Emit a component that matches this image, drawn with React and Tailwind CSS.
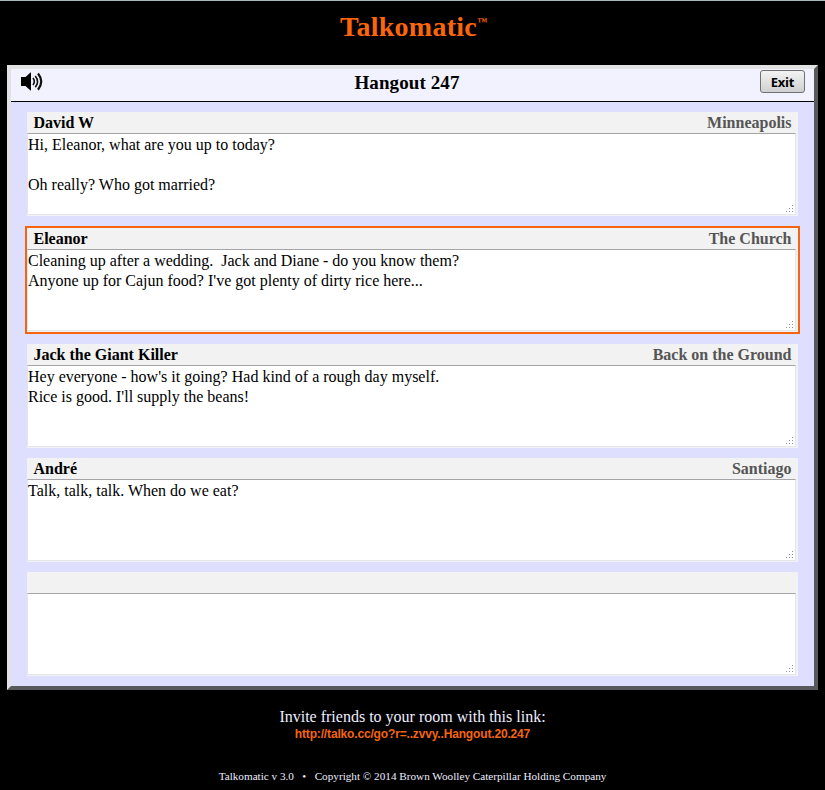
import React from 'react';

const talkers = [
  { name: 'David W', place: 'Minneapolis', text: 'Hi, Eleanor, what are you up to today?\n\nOh really? Who got married?' },
  {
    name: 'Eleanor',
    place: 'The Church',
    text: "Cleaning up after a wedding.  Jack and Diane - do you know them?\nAnyone up for Cajun food? I've got plenty of dirty rice here...",
    active: true,
  },
  {
    name: 'Jack the Giant Killer',
    place: 'Back on the Ground',
    text: "Hey everyone - how's it going? Had kind of a rough day myself.\nRice is good. I'll supply the beans!",
  },
  { name: 'André', place: 'Santiago', text: 'Talk, talk, talk. When do we eat?' },
  { name: '', place: '', text: '' },
];

function Speaker() {
  return (
    <svg width="24" height="20" viewBox="0 0 24 20" className="block">
      <path d="M1 5h4.500L10.500 .5h.5v18h-.5L5.500 14H1z" fill="#000" />
      <g fill="none" stroke="#111" strokeWidth="1.600">
        <path d="M13 6q2.600 3.500 0 7" />
        <path d="M15.300 4q4.400 5.500 0 11.200" />
        <path d="M18 1.500q6.500 8 0 16.200" strokeWidth="2.200" />
      </g>
    </svg>
  );
}

function Grip() {
  return (
    <svg width="8" height="8" viewBox="0 0 8 8" className="absolute right-[1px] bottom-[1px]" fill="#909090">
      <rect x="6" y="0" width="1" height="1" />
      <rect x="3" y="3" width="1" height="1" />
      <rect x="6" y="3" width="1" height="1" />
      <rect x="0" y="6" width="1" height="1" />
      <rect x="3" y="6" width="1" height="1" />
      <rect x="6" y="6" width="1" height="1" />
    </svg>
  );
}

function Talker({ name, place, text, active }) {
  return (
    <section className={active ? 'border-2 border-[#f5650f]' : 'mx-[2px]'}>
      <div className="h-[104px] bg-[#f2f2f2]">
        <div className="flex h-[21px] justify-between pr-[6.500px] pl-[6.500px] text-[16px] leading-[22px] font-bold">
          <span>{name}</span>
          <span className="text-[#555]">{place}</span>
        </div>
        <div className="relative mr-[2px] h-[82px] border border-[#e3e6ea] border-t-[#a5a5a9] bg-white text-[16px] leading-5 whitespace-pre">
          <div className="pt-[1px]">{text}</div>
          <Grip />
        </div>
      </div>
    </section>
  );
}

export default function App() {
  return (
    <div className="flex h-[790px] w-[825px] flex-col overflow-hidden border-t border-[#a9b7bd] bg-black font-['Liberation_Serif',serif] text-black">
      <header className="flex h-[64px] shrink-0 justify-center pt-[9px] pl-[2px] text-[28px] leading-[34px] font-bold text-[#fb660a]">
        <h1 className="tracking-[0.250px]">Talkomatic</h1>
        <span className="pt-[6px] text-[10px] leading-[12px]">™</span>
      </header>
      <main className="ml-[7px] h-[625px] w-[811px] shrink-0 border-4 border-t-[#e2e2e2] border-r-[#58595d] border-b-[#58595d] border-l-[#e2e2e4] bg-[#dedeff]">
        <div className="grid h-[33px] grid-cols-[1fr_auto_1fr] border-b border-black bg-[#f2f2ff] pr-[9px] pl-[9px]">
          <div className="pt-[3px]"><Speaker /></div>
          <h2 className="relative -left-[5.500px] pt-[2px] text-[19px] leading-[24px] font-bold tracking-[0.100px]">Hangout 247</h2>
          <button className="mt-[1px] h-[23px] w-[45px] justify-self-end rounded-[3px] border border-[#707070] bg-linear-to-b from-[#f3f3f3] to-[#d0d0d0] font-['Open_Sans',sans-serif] text-[13px] leading-[22px] font-bold tracking-[-0.200px]">
            Exit
          </button>
        </div>
        <div className="flex flex-col gap-[10px] pt-[10px] pr-[14px] pl-[14px]">
          {talkers.map((t, i) => <Talker key={i} {...t} />)}
        </div>
      </main>
      <footer className="flex flex-col items-center">
        <p className="pt-[17px] text-[16px] leading-[20px] text-[#eeeeff]">Invite friends to your room with this link:</p>
        <a className="font-['Liberation_Sans',Arial,sans-serif] text-[12px] leading-[14px] font-bold tracking-[-0.160px] text-[#f5650f]">http://talko.cc/go?r=..zvvy..Hangout.20.247</a>
        <p className="pt-[27px] text-[11.200px] leading-[16px] whitespace-pre text-[#eeeeff]">{'Talkomatic v 3.0   •   Copyright © 2014 Brown Woolley Caterpillar Holding Company'}</p>
      </footer>
    </div>
  );
}
